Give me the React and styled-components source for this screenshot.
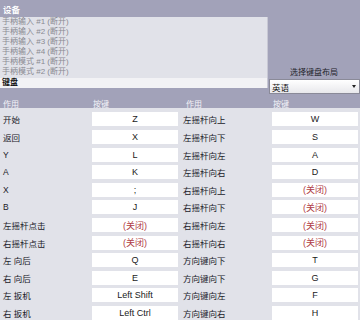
import React from "react";
import styled, { createGlobalStyle } from "styled-components";

const GlobalStyle = createGlobalStyle`
  html, body {
    margin: 0;
    padding: 0;
    background: #a2a2b9;
  }
  body {
    font-family: "Liberation Sans", "Noto Sans CJK SC", sans-serif;
  }
`;

const Page = styled.div`
  width: 360px;
  height: 320px;
  overflow: hidden;
  background: #a2a2b9;
  display: flex;
  flex-direction: column;
`;

const TitleBar = styled.div`
  height: 18px;
  padding-left: 3px;
  display: flex;
  align-items: center;
  color: #ffffff;
  font-size: 8.5px;
  font-weight: bold;
`;

const TopSection = styled.div`
  display: flex;
  height: 71px;
`;

const DeviceList = styled.div`
  width: 267px;
  background: #e1e2e9;
  border-right: 1px solid #c8c8d4;
  display: flex;
  flex-direction: column;
`;

const DeviceItem = styled.div`
  height: 10px;
  line-height: 10px;
  padding-left: 2px;
  font-size: 8px;
  color: ${(p) => (p.$selected ? "#111111" : "#8a8a92")};
  background: ${(p) => (p.$selected ? "#f2f2f5" : "transparent")};
  font-weight: ${(p) => (p.$selected ? "bold" : "normal")};
  margin-top: ${(p) => (p.$selected ? "1px" : "0")};
`;

const LayoutPanel = styled.div`
  flex: 1;
  display: flex;
  flex-direction: column;
  justify-content: flex-end;
  margin-bottom: -6px;
`;

const LayoutLabel = styled.div`
  font-size: 8px;
  color: #22222a;
  text-align: center;
  margin-bottom: 2px;
`;

const Select = styled.div`
  height: 13px;
  margin-left: 1px;
  border: 1px solid #8a8a98;
  background: linear-gradient(#ffffff, #e8e8ec);
  display: flex;
  align-items: center;
  justify-content: space-between;
  padding: 0 3px 0 2px;
  font-size: 8.5px;
  color: #111111;
`;

const Arrow = styled.span`
  width: 0;
  height: 0;
  border-left: 2.5px solid transparent;
  border-right: 2.5px solid transparent;
  border-top: 3px solid #222222;
`;

const HeaderRow = styled.div`
  margin-top: 10px;
  height: 10px;
  display: grid;
  grid-template-columns: 92px 91px 89px 88px;
  align-items: center;
  font-size: 8px;
  color: #f4f4f8;
`;

const HeaderCell = styled.div`
  padding-left: ${(p) => (p.$key ? "1px" : "3px")};
`;

const Table = styled.div`
  flex: 1;
  background: #e1e2e9;
  padding-top: 4px;
  display: grid;
  grid-template-columns: 92px 86px 94px 86px;
  grid-auto-rows: 14px;
  row-gap: 3.6px;
`;

const Label = styled.div`
  padding-left: ${(p) => (p.$right ? "5px" : "3px")};
  display: flex;
  align-items: center;
  font-size: 8.5px;
  color: #202028;
  white-space: pre;
`;

const KeyBox = styled.div`
  background: #ffffff;
  display: flex;
  align-items: center;
  justify-content: center;
  font-size: 9px;
  color: ${(p) => (p.$off ? "#b03c44" : "#1a1a1a")};
`;

const devices = [
  "手柄输入 #1 (断开)",
  "手柄输入 #2 (断开)",
  "手柄输入 #3 (断开)",
  "手柄输入 #4 (断开)",
  "手柄模式 #1 (断开)",
  "手柄模式 #2 (断开)",
];

const OFF = "(关闭)";

const rows = [
  ["开始", "Z", "左摇杆向上", "W"],
  ["返回", "X", "左摇杆向下", "S"],
  ["Y", "L", "左摇杆向左", "A"],
  ["A", "K", "左摇杆向右", "D"],
  ["X", ";", "右摇杆向上", OFF],
  ["B", "J", "右摇杆向下", OFF],
  ["左摇杆点击", OFF, "右摇杆向左", OFF],
  ["右摇杆点击", OFF, "右摇杆向右", OFF],
  ["左 向后", "Q", "方向键向下", "T"],
  ["右 向后", "E", "方向键向下", "G"],
  ["左 扳机", "Left Shift", "方向键向左", "F"],
  ["右 扳机", "Left Ctrl", "方向键向右", "H"],
];

export default function App() {
  return (
    <Page>
      <GlobalStyle />
      <TitleBar>设备</TitleBar>
      <TopSection>
        <DeviceList>
          {devices.map((d) => (
            <DeviceItem key={d}>{d}</DeviceItem>
          ))}
          <DeviceItem $selected>键盘</DeviceItem>
        </DeviceList>
        <LayoutPanel>
          <LayoutLabel>选择键盘布局</LayoutLabel>
          <Select>
            <span>英语</span>
            <Arrow />
          </Select>
        </LayoutPanel>
      </TopSection>
      <HeaderRow>
        <HeaderCell>作用</HeaderCell>
        <HeaderCell $key>按键</HeaderCell>
        <HeaderCell>作用</HeaderCell>
        <HeaderCell $key>按键</HeaderCell>
      </HeaderRow>
      <Table>
        {rows.map(([a, ka, b, kb]) => (
          <React.Fragment key={a + b}>
            <Label>{a}</Label>
            <KeyBox $off={ka === OFF}>{ka}</KeyBox>
            <Label $right>{b}</Label>
            <KeyBox $off={kb === OFF}>{kb}</KeyBox>
          </React.Fragment>
        ))}
      </Table>
    </Page>
  );
}
